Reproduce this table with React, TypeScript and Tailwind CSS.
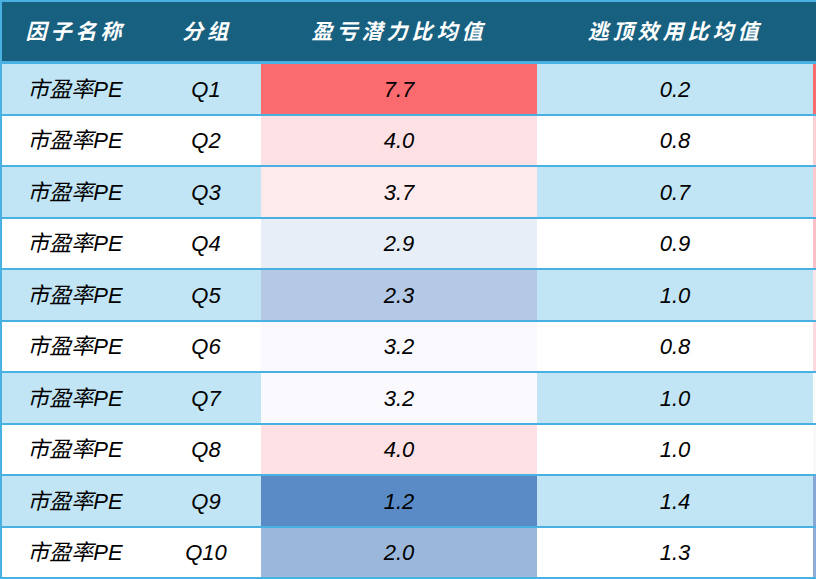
const rows = [
  { g: "Q1", a: "7.7", b: "0.2", ca: "bg-[#f96b6e]", cb: "bg-[#f96b6e]" },
  { g: "Q2", a: "4.0", b: "0.8", ca: "bg-[#fde1e4]", cb: "bg-[#fbd0d5]" },
  { g: "Q3", a: "3.7", b: "0.7", ca: "bg-[#fdeaed]", cb: "bg-[#fbc9ce]" },
  { g: "Q4", a: "2.9", b: "0.9", ca: "bg-[#e8eef8]", cb: "bg-[#fbc1c7]" },
  { g: "Q5", a: "2.3", b: "1.0", ca: "bg-[#b3c9e6]", cb: "bg-[#fde6e9]" },
  { g: "Q6", a: "3.2", b: "0.8", ca: "bg-[#f9f9fd]", cb: "bg-[#fcd9dd]" },
  { g: "Q7", a: "3.2", b: "1.0", ca: "bg-[#fafafe]", cb: "bg-[#fdfcfd]" },
  { g: "Q8", a: "4.0", b: "1.0", ca: "bg-[#fde1e4]", cb: "bg-[#f8f8fb]" },
  { g: "Q9", a: "1.2", b: "1.4", ca: "bg-[#5a8bc6]", cb: "bg-[#86a6d5]" },
  { g: "Q10", a: "2.0", b: "1.3", ca: "bg-[#9bb8dc]", cb: "bg-[#8eadd9]" },
];

const font = { fontFamily: '"Liberation Sans", "Noto Sans CJK SC", sans-serif' };

export default function App() {
  return (
    <div className="w-[816px] h-[579px] overflow-hidden bg-white" style={font}>
      <div className="w-[840px] border-l-2 border-t-2 border-[#48b1e2]">
        {/* header */}
        <div className="flex h-[62px] bg-[#17607f] border-b-[3px] border-[#48b1e2] text-white font-bold italic text-[21px] tracking-[4px]">
          <div className="w-[151px] flex items-center justify-center pr-[4px]">因子名称</div>
          <div className="w-[108px] flex items-center justify-center">分组</div>
          <div className="w-[276px] flex items-center justify-center">盈亏潜力比均值</div>
          <div className="w-[276px] flex items-center justify-center">逃顶效用比均值</div>
          <div className="flex-1" />
        </div>

        {rows.map((r, i) => {
          const stripe = i % 2 === 0 ? "bg-[#c1e5f5]" : "bg-white";
          const h = i % 2 === 0 ? "h-[52px]" : "h-[51px]";
          return (
            <div
              key={r.g}
              className={`flex ${h} border-b-2 border-[#48b1e2] italic text-[22px] text-black`}
            >
              <div className={`w-[151px] ${stripe} flex items-center justify-center pr-[5px]`}>市盈率PE</div>
              <div className={`w-[108px] ${stripe} flex items-center justify-center pr-[2px]`}>{r.g}</div>
              <div className={`w-[276px] ${r.ca} flex items-center justify-center`}>{r.a}</div>
              <div className={`w-[276px] ${stripe} flex items-center justify-center`}>{r.b}</div>
              <div className={`flex-1 ${r.cb}`} />
            </div>
          );
        })}
      </div>
    </div>
  );
}
